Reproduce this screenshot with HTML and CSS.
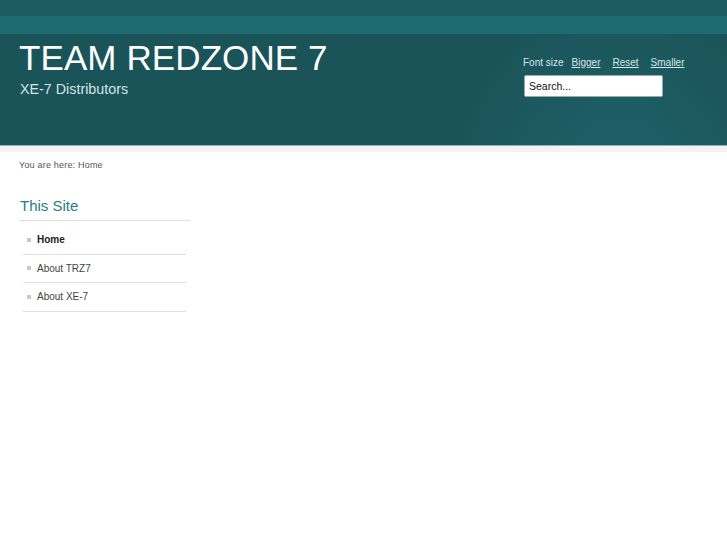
FILE: index.html
```html
<!DOCTYPE html>
<html>
<head>
<meta charset="utf-8">
<title>Team Redzone 7</title>
<link rel="stylesheet" href="styles.css">
</head>
<body>
<header class="header">
  <div class="band band-top"></div>
  <div class="band band-mid"></div>
  <div class="header-main">
    <div class="brand">
      <h1 class="site-title">TEAM REDZONE 7</h1>
      <p class="site-desc">XE-7 Distributors</p>
    </div>
    <div class="tools">
      <div class="fontsize">
        <span class="fs-label">Font size</span>
        <a href="#" class="fs-link">Bigger</a>
        <a href="#" class="fs-link">Reset</a>
        <a href="#" class="fs-link">Smaller</a>
      </div>
      <div class="search">Search...</div>
    </div>
  </div>
</header>
<div class="header-edge"></div>
<div class="page">
  <p class="breadcrumb">You are here: Home</p>
  <aside class="sidebar">
    <h3 class="side-title">This Site</h3>
    <ul class="menu">
      <li class="menu-item active"><span class="bullet"></span>Home</li>
      <li class="menu-item"><span class="bullet"></span>About TRZ7</li>
      <li class="menu-item"><span class="bullet"></span>About XE-7</li>
    </ul>
  </aside>
</div>
</body>
</html>
```

FILE: styles.css
```css
html, body {
  margin: 0;
  padding: 0;
  background: #ffffff;
  font-family: "Liberation Sans", Arial, sans-serif;
}

.header {
  height: 145px;
  background-color: #1a5459;
  background-image: radial-gradient(ellipse 170px 190px at 620px 185px, rgba(36, 112, 118, 0.5), rgba(36, 112, 118, 0) 100%);
  display: flex;
  flex-direction: column;
}

.band-top {
  height: 16px;
  background: #1c5d62;
}

.band-mid {
  height: 18px;
  background: #1e6a71;
}

.header-main {
  flex: 1;
  display: flex;
  justify-content: space-between;
  padding: 6px 42px 0 19px;
}

.site-title {
  margin: 0;
  font-weight: normal;
  font-size: 35px;
  line-height: 35px;
  color: #ffffff;
  letter-spacing: 0.1px;
}

.site-desc {
  margin: 6px 0 0 1px;
  font-size: 14.3px;
  line-height: 16px;
  color: #d3e4e5;
}

.tools {
  width: 162px;
  padding-top: 16px;
  display: flex;
  flex-direction: column;
}

.fontsize {
  display: flex;
  align-items: baseline;
  white-space: nowrap;
  font-size: 10px;
  line-height: 14px;
  color: #d6e8e9;
}

.fs-label {
  margin-right: 8px;
}

.fs-link {
  color: #d6e8e9;
  text-decoration: underline;
  margin-right: 12px;
}

.fs-link:last-child {
  margin-right: 0;
}

.search {
  margin-top: 5px;
  margin-left: 1px;
  width: 133px;
  height: 20px;
  background: #ffffff;
  border: 1px solid #9aa9aa;
  border-radius: 2px;
  padding: 0 0 0 4px;
  font-size: 10.5px;
  line-height: 20px;
  color: #111;
}

.header-edge {
  height: 6px;
  border-top: 1px solid #8ab5b7;
  background: #f3f3f3;
}

.page {
  padding: 0 19px;
}

.breadcrumb {
  margin: 7px 0 0;
  font-size: 9px;
  line-height: 12px;
  color: #555555;
  letter-spacing: 0.2px;
}

.sidebar {
  width: 171px;
  margin-top: 26px;
}

.side-title {
  margin: 0;
  padding: 0 0 5px 1px;
  border-bottom: 1px solid #dddddd;
  font-weight: normal;
  font-size: 15px;
  line-height: 18px;
  color: #2b7b85;
}

.menu {
  list-style: none;
  margin: 5px 4px 0;
  padding: 0;
}

.menu-item {
  display: flex;
  align-items: center;
  height: 27.5px;
  border-bottom: 1px solid #dddddd;
  font-size: 10px;
  color: #444444;
  padding-left: 4px;
}

.menu-item.active {
  font-weight: bold;
  color: #222222;
}

.bullet {
  width: 4px;
  height: 4px;
  background: #c8c8c8;
  margin-right: 6px;
}
```
